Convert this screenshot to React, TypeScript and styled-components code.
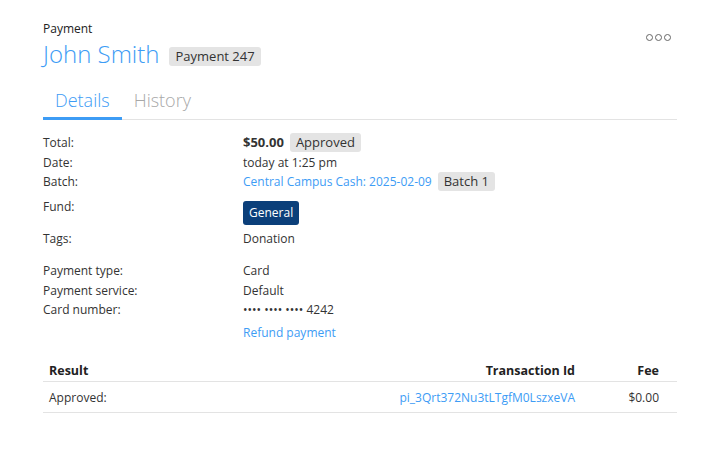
import React from "react";
import styled, { createGlobalStyle } from "styled-components";

const Global = createGlobalStyle`
  html, body { margin: 0; padding: 0; background: #fff; }
  body { font-family: "Open Sans", "Noto Sans", sans-serif; color: #222; }
`;

const BLUE = "#3d9cf5";

const Page = styled.div`
  padding: 20px 45px 0 43px;
  width: 634px;
`;

const Header = styled.div`
  display: flex;
  justify-content: space-between;
  align-items: flex-start;
`;

const Kicker = styled.div`
  font-size: 12px;
  line-height: 18px;
  color: #222;
`;

const TitleRow = styled.div`
  display: flex;
  align-items: center;
  gap: 10px;
`;

const Title = styled.h1`
  margin: 0;
  font-size: 24px;
  font-weight: 300;
  line-height: 32px;
  color: ${BLUE};
`;

const Badge = styled.span<{ $h?: number; $mt?: number }>`
  display: inline-block;
  background: #e4e4e4;
  color: #333;
  border-radius: 3px;
  font-size: 13px;
  line-height: ${(p) => p.$h ?? 19}px;
  padding: 0 6px;
  margin-top: ${(p) => p.$mt ?? 0}px;
`;

const MoreButton = styled.div`
  display: flex;
  gap: 2px;
  margin-top: 14px;
  margin-right: 6px;
`;

const Dot = styled.span`
  width: 5px;
  height: 5px;
  border: 1.5px solid #666;
  border-radius: 50%;
`;

const Tabs = styled.div`
  display: flex;
  margin-top: 18px;
  border-bottom: 1px solid #e3e3e3;
`;

const Tab = styled.div<{ $active?: boolean }>`
  font-size: 18px;
  font-weight: 300;
  line-height: 24px;
  padding: 0 12px 5px;
  color: ${(p) => (p.$active ? BLUE : "#a8a8a8")};
  border-bottom: 3px solid ${(p) => (p.$active ? BLUE : "transparent")};
  margin-bottom: -1px;
`;

const Details = styled.div`
  display: grid;
  grid-template-columns: 200px 1fr;
  margin-top: 13px;
  font-size: 12px;
  line-height: 19.5px;
`;

const Label = styled.div<{ $mt?: number }>`
  color: #333;
  margin-top: ${(p) => p.$mt ?? 0}px;
`;

const Value = styled.div<{ $mt?: number }>`
  display: flex;
  align-items: center;
  gap: 6px;
  color: #333;
  margin-top: ${(p) => p.$mt ?? 0}px;
`;

const Strong = styled.span`
  font-weight: 700;
  font-size: 13px;
`;

const Link = styled.a`
  color: ${BLUE};
  text-decoration: none;
  cursor: pointer;
`;

const FundButton = styled.span`
  display: inline-block;
  background: #0b3f7a;
  color: #fff;
  font-size: 12px;
  line-height: 24px;
  padding: 0 6px;
  border-radius: 3px;
`;

const Table = styled.table`
  width: 100%;
  border-collapse: collapse;
  margin-top: 17px;
  font-size: 12px;
`;

const Th = styled.th<{ $align?: string; $pr?: number; $w?: number }>`
  text-align: ${(p) => p.$align ?? "left"};
  width: ${(p) => (p.$w ? `${p.$w}px` : "auto")};
  font-weight: 700;
  font-size: 12.5px;
  padding: 3px ${(p) => p.$pr ?? 6}px 2px 6px;
  border-bottom: 1px solid #e3e3e3;
  line-height: 17px;
`;

const Td = styled.td<{ $align?: string; $pr?: number }>`
  text-align: ${(p) => p.$align ?? "left"};
  padding: 8px ${(p) => p.$pr ?? 6}px 6px 6px;
  border-bottom: 1px solid #e3e3e3;
  line-height: 16px;
  color: #333;
`;

export default function App() {
  return (
    <>
      <Global />
      <Page>
        <Header>
          <div>
            <Kicker>Payment</Kicker>
            <TitleRow>
              <Title>John Smith</Title>
              <Badge $h={19} $mt={5}>Payment 247</Badge>
            </TitleRow>
          </div>
          <MoreButton>
            <Dot />
            <Dot />
            <Dot />
          </MoreButton>
        </Header>

        <Tabs>
          <Tab $active>Details</Tab>
          <Tab>History</Tab>
        </Tabs>

        <Details>
          <Label>Total:</Label>
          <Value>
            <Strong>$50.00</Strong>
            <Badge>Approved</Badge>
          </Value>
          <Label>Date:</Label>
          <Value>today at 1:25 pm</Value>
          <Label>Batch:</Label>
          <Value>
            <Link>Central Campus Cash: 2025-02-09</Link>
            <Badge>Batch 1</Badge>
          </Value>
          <Label $mt={5}>Fund:</Label>
          <Value $mt={9}>
            <FundButton>General</FundButton>
          </Value>
          <Label $mt={4}>Tags:</Label>
          <Value $mt={4}>Donation</Value>
          <Label $mt={13}>Payment type:</Label>
          <Value $mt={13}>Card</Value>
          <Label>Payment service:</Label>
          <Value>Default</Value>
          <Label>Card number:</Label>
          <Value>•••• •••• •••• 4242</Value>
          <Label />
          <Value $mt={3}>
            <Link>Refund payment</Link>
          </Value>
        </Details>

        <Table>
          <thead>
            <tr>
              <Th>Result</Th>
              <Th $align="right" $pr={0}>Transaction Id</Th>
              <Th $align="right" $pr={18} $w={78}>Fee</Th>
            </tr>
          </thead>
          <tbody>
            <tr>
              <Td>Approved:</Td>
              <Td $align="right" $pr={0}>
                <Link>pi_3Qrt372Nu3tLTgfM0LszxeVA</Link>
              </Td>
              <Td $align="right" $pr={18}>$0.00</Td>
            </tr>
          </tbody>
        </Table>
      </Page>
    </>
  );
}
